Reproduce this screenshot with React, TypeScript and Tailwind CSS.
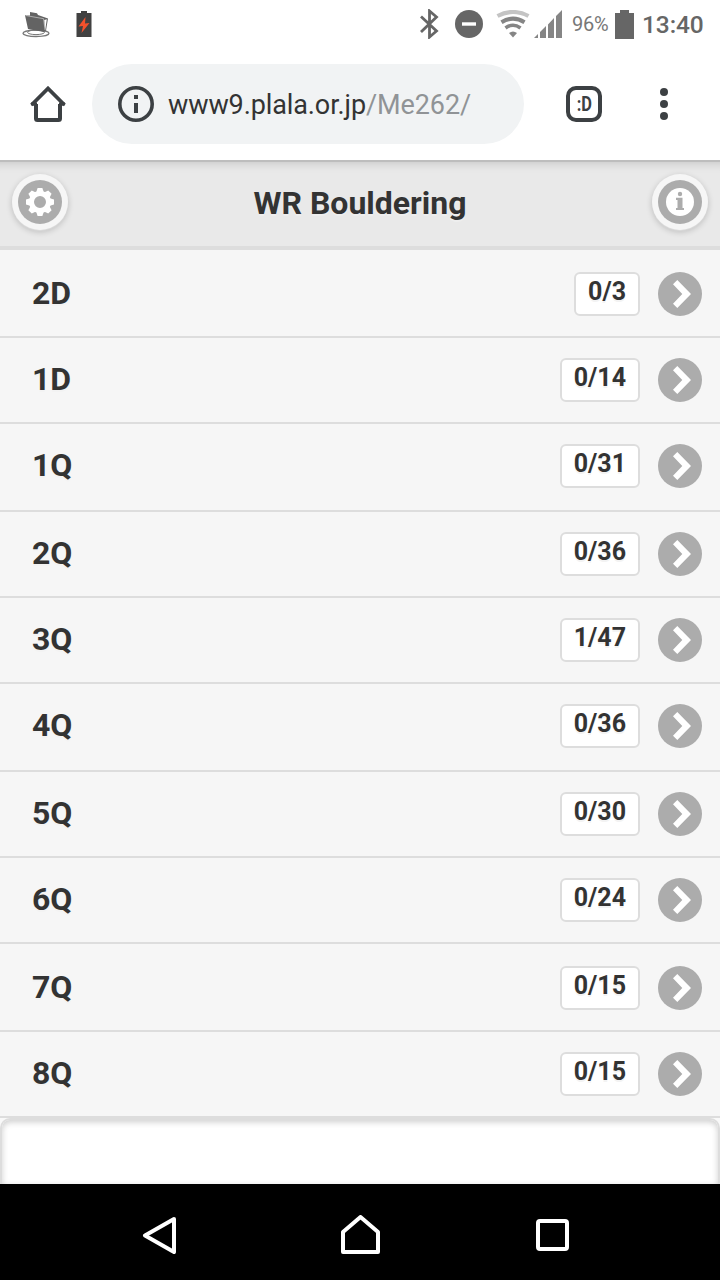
import clsx from "clsx";

interface Grade {
  name: string;
  done: number;
  total: number;
  className: string;
}

// row heights come from 43.4 css px rows snapped to the device grid
const GRADES: Grade[] = [
  { name: "2D", done: 0, total: 3, className: "h-[88px] pt-[22px]" },
  { name: "1D", done: 0, total: 14, className: "h-[86px] pt-5" },
  { name: "1Q", done: 0, total: 31, className: "h-[88px] pt-5" },
  { name: "2Q", done: 0, total: 36, className: "h-[86px] pt-5" },
  { name: "3Q", done: 1, total: 47, className: "h-[86px] pt-5" },
  { name: "4Q", done: 0, total: 36, className: "h-[88px] pt-5" },
  { name: "5Q", done: 0, total: 30, className: "h-[86px] pt-5" },
  { name: "6Q", done: 0, total: 24, className: "h-[86px] pt-5" },
  { name: "7Q", done: 0, total: 15, className: "h-[88px] pt-[22px]" },
  { name: "8Q", done: 0, total: 15, className: "h-[86px] pt-5" },
];

const TEETH = [0, 45, 90, 135, 180, 225, 270, 315];

function StatusBar() {
  return (
    <div className="flex h-12 items-center justify-between pl-[22px] pr-[17px] text-[#666]">
      <div className="flex items-center gap-[26px]">
        <svg width="28" height="28" viewBox="22 12 28 28">
          <ellipse cx="36" cy="35.300" rx="13" ry="3.200" fill="none" stroke="#777" strokeWidth="1.300" />
          <ellipse cx="36" cy="34.300" rx="8.500" ry="2.300" fill="none" stroke="#777" strokeWidth="1" />
          <path d="M25 17.300L30 17.500V14L37 15.300L38 17L48 20.500L46 32.500L44 34L28 31Z" fill="#636363" />
          <path d="M26 17.600L43.600 20.700L45 32" fill="none" stroke="#ddd" strokeWidth="0.600" />
          <path d="M44.300 22L46.800 21.300L45.200 32Z" fill="#fff" />
        </svg>
        <svg width="16" height="28" viewBox="76 10 16 28">
          <path d="M81 11h6v2h4.500v24h-15v-24h4.500z" fill="#414141" />
          <path d="M85.500 17L78.500 26.500L83 26L81.500 33L89.500 23L85 23.500Z" fill="#f4512c" />
        </svg>
      </div>
      <div className="flex items-center">
        <svg width="20" height="30" viewBox="419 9 20 30" fill="none">
          <path
            d="M421 16.500L436.500 31L429.500 37V11L436.500 17L421 32"
            stroke="#666"
            strokeWidth="2.800"
          />
        </svg>
        <svg className="ml-4" width="28" height="28" viewBox="0 0 28 28">
          <circle cx="14" cy="14" r="14" fill="#666" />
          <rect x="7" y="12.300" width="14" height="3.400" fill="#fff" />
        </svg>
        <svg className="ml-[13px]" width="34" height="28" viewBox="496 11 34 28" fill="none">
          <path d="M497.500 17Q513 9 528.500 17" stroke="#c4c4c4" strokeWidth="4.200" />
          <path d="M501.500 23.300Q513 16 524.500 23.300" stroke="#858585" strokeWidth="4" />
          <path d="M505.500 29Q513 23.500 520.500 29" stroke="#858585" strokeWidth="3.600" />
          <path d="M509 34Q513 31 517 34L513 38.500Z" fill="#858585" />
        </svg>
        <svg className="ml-1" width="28" height="28" viewBox="534 11 28 28" fill="#858585">
          <path d="M534 39L538 35V39ZM540 39V33L546 27V39ZM548 39V25.500L554 19V39ZM556 39V17L562 11V39Z" />
        </svg>
        <span className="ml-[10px] w-[43px] text-[20px] leading-none tracking-[-0.2px] text-[#777]">
          96%
        </span>
        <svg width="19" height="29" viewBox="0 0 19 29">
          <path d="M5 0h9v3h5v26H0V3h5z" fill="#666" />
        </svg>
        <span className="ml-2 w-[61px] whitespace-nowrap pt-0.5 text-[24.500px] font-medium leading-none tracking-[-0.1px]">
          13:40
        </span>
      </div>
    </div>
  );
}

function AddressBar() {
  return (
    <div className="flex h-28 items-center pl-[30px] text-[#3c4043]">
      <svg width="36" height="36" viewBox="30 86 36 36" fill="none" stroke="#3c4043">
        <path
          d="M36 104V118.500Q36 120 37.500 120H58.500Q60 120 60 118.500V104"
          strokeWidth="4"
        />
        <path d="M31.500 105L48 88.500L64.500 105" strokeWidth="3.800" />
        <path d="M31 104H37M59 104H65" strokeWidth="3" />
      </svg>
      <div className="ml-[26px] flex h-20 w-[432px] items-center rounded-full bg-[#f1f3f4] pl-[26px]">
        <svg width="36" height="36" viewBox="0 0 36 36">
          <circle cx="18" cy="18" r="16.200" fill="none" stroke="#3c4043" strokeWidth="3.600" />
          <path d="M16 9h4v4h-4zM16 17h4v10h-4z" fill="#3c4043" />
        </svg>
        <span className="ml-[14px] whitespace-nowrap pt-0.5 text-[27px] leading-none tracking-[-0.1px] text-[#333]">
          www9.plala.or.jp<span className="text-[#909396]">/Me262/</span>
        </span>
      </div>
      <div className="ml-[42px] flex size-9 items-center justify-center rounded-[10px] border-4 border-[#3c4043] text-[20px] font-bold leading-none">
        <span className="scale-x-[0.820]">:D</span>
      </div>
      <div className="ml-[58px] flex flex-col gap-1">
        <i className="size-2 rounded-full bg-[#3c4043]" />
        <i className="size-2 rounded-full bg-[#3c4043]" />
        <i className="size-2 rounded-full bg-[#3c4043]" />
      </div>
    </div>
  );
}

function GearIcon() {
  return (
    <svg width="44" height="44" viewBox="-22 -22 44 44">
      <circle r="22" fill="#acacac" />
      <circle r="8.500" fill="none" stroke="#fff" strokeWidth="5" />
      {TEETH.map((angle) => (
        <path
          key={angle}
          d="M-4 -9L-2.400 -14H2.400L4 -9Z"
          fill="#fff"
          transform={`rotate(${angle})`}
        />
      ))}
    </svg>
  );
}

function InfoIcon() {
  return (
    <svg width="44" height="44" viewBox="-22 -22 44 44">
      <circle r="22" fill="#acacac" />
      <circle r="14" fill="#fff" />
      <circle cy="-8" r="2.200" fill="#acacac" />
      <path d="M-4 -4.200H2.500V6H4V8H-4V6H-2.500V-2H-4Z" fill="#acacac" />
    </svg>
  );
}

function ArrowIcon() {
  return (
    <svg className="ml-[18px] shrink-0" width="44" height="44" viewBox="0 0 44 44">
      <circle cx="22" cy="22" r="22" fill="#acacac" />
      <path d="M19.300 8L33 22L19.300 36L15 31.700L24.300 22L15 12.300Z" fill="#fff" />
    </svg>
  );
}

function RoundButton({ label, children }: { label: string; children: React.ReactNode }) {
  return (
    <button
      aria-label={label}
      className="flex size-14 items-center justify-center rounded-full bg-[#f6f6f6] shadow-[0_1px_1px_#ddd,0_2px_6px_rgba(0,0,0,0.2)]"
    >
      {children}
    </button>
  );
}

function PageHeader() {
  return (
    <header className="flex h-[90px] items-start justify-between border-b-4 border-[#ddd] bg-[#e9e9e9] px-3 pt-[14px] shadow-[inset_0_2px_0_#bdbdbd,inset_0_14px_10px_-10px_rgba(0,0,0,0.140)]">
      <RoundButton label="Settings">
        <GearIcon />
      </RoundButton>
      <h1 className="pt-[11px] text-[32px] font-bold leading-[36px] [text-shadow:0_2px_0_#eee]">
        WR Bouldering
      </h1>
      <RoundButton label="About">
        <InfoIcon />
      </RoundButton>
    </header>
  );
}

function GradeRow({ grade }: { grade: Grade }) {
  return (
    <li
      className={clsx(
        "flex items-start border-b-2 border-[#ddd] bg-[#f6f6f6] pl-8 pr-[18px]",
        grade.className
      )}
    >
      <span className="flex-1 text-[32px] font-bold leading-[43px] [text-shadow:0_2px_0_#f3f3f3]">
        {grade.name}
      </span>
      <span className="h-11 rounded-md border-2 border-[#ddd] bg-white px-3 text-[25px] font-bold leading-[36px] [text-shadow:0_2px_0_#f3f3f3]">
        {grade.done}/{grade.total}
      </span>
      <ArrowIcon />
    </li>
  );
}

function NavBar() {
  return (
    <nav className="flex h-24 items-center bg-black pl-[142px] pt-1.5">
      <svg width="36" height="38" viewBox="142 1216 36 38" fill="none">
        <path
          d="M174 1219L145 1235.500L174 1252Z"
          stroke="#fff"
          strokeWidth="4"
          strokeLinejoin="round"
        />
      </svg>
      <svg className="ml-[162px]" width="40" height="40" viewBox="340 1215 40 40" fill="none">
        <path
          d="M343 1252V1232L360.500 1217L378 1232V1252Z"
          stroke="#fff"
          strokeWidth="4"
          strokeLinejoin="round"
        />
      </svg>
      <div className="ml-[156px] h-8 w-[33px] rounded-sm border-4 border-white" />
    </nav>
  );
}

function App() {
  return (
    <div className="flex h-[1280px] w-[720px] flex-col overflow-hidden bg-white font-[Roboto,sans-serif] text-[#333]">
      <StatusBar />
      <AddressBar />
      <PageHeader />
      <ul>
        {GRADES.map((grade) => (
          <GradeRow key={grade.name} grade={grade} />
        ))}
      </ul>
      <div className="flex-1 bg-[#f9f9f9]">
        <div className="h-full rounded-t-[10px] border-2 border-b-0 border-[#ddd] bg-white shadow-[inset_0_2px_6px_rgba(0,0,0,0.2)]" />
      </div>
      <NavBar />
    </div>
  );
}

export default App;
